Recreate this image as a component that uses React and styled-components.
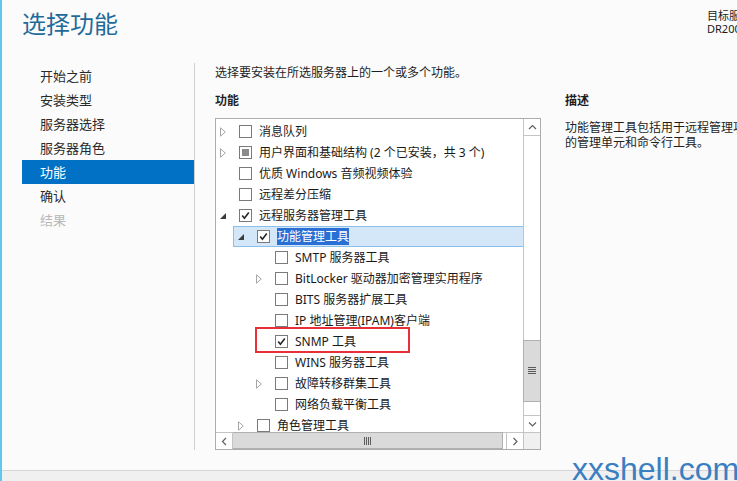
import React from 'react'
import styled, { createGlobalStyle } from 'styled-components'

const GlobalStyle = createGlobalStyle`
  html, body {
    margin: 0;
    padding: 0;
    background: #fbfbfb;
    overflow: hidden;
  }
  body {
    font-family: "Noto Sans", "Noto Sans CJK SC", sans-serif;
    color: #1e1e1e;
  }
`

const steps = [
  { label: '开始之前' },
  { label: '安装类型' },
  { label: '服务器选择' },
  { label: '服务器角色' },
  { label: '功能', active: true },
  { label: '确认' },
  { label: '结果', disabled: true },
]

// level, arrow: none | closed | open, check: off | on | partial
const features = [
  { id: 1, level: 0, arrow: 'closed', check: 'off', label: '消息队列' },
  { id: 2, level: 0, arrow: 'closed', check: 'partial', label: '用户界面和基础结构 (2 个已安装，共 3 个)' },
  { id: 3, level: 0, arrow: 'none', check: 'off', label: '优质 Windows 音频视频体验' },
  { id: 4, level: 0, arrow: 'none', check: 'off', label: '远程差分压缩' },
  { id: 5, level: 0, arrow: 'open', check: 'on', label: '远程服务器管理工具' },
  { id: 6, level: 1, arrow: 'open', check: 'on', label: '功能管理工具', selected: true },
  { id: 7, level: 2, arrow: 'none', check: 'off', label: 'SMTP 服务器工具' },
  { id: 8, level: 2, arrow: 'closed', check: 'off', label: 'BitLocker 驱动器加密管理实用程序' },
  { id: 9, level: 2, arrow: 'none', check: 'off', label: 'BITS 服务器扩展工具' },
  { id: 10, level: 2, arrow: 'none', check: 'off', label: 'IP 地址管理(IPAM)客户端' },
  { id: 11, level: 2, arrow: 'none', check: 'on', label: 'SNMP 工具' },
  { id: 12, level: 2, arrow: 'none', check: 'off', label: 'WINS 服务器工具' },
  { id: 13, level: 2, arrow: 'closed', check: 'off', label: '故障转移群集工具' },
  { id: 14, level: 2, arrow: 'none', check: 'off', label: '网络负载平衡工具' },
  { id: 15, level: 1, arrow: 'closed', check: 'off', label: '角色管理工具' },
]

const Arrow = ({ type }) => {
  if (type === 'closed') {
    return (
      <svg width="6" height="10" viewBox="0 0 6 10">
        <path d="M0.5 0.8 L5.3 5 L0.5 9.2 Z" fill="none" stroke="#a6a6a6" strokeWidth="1" />
      </svg>
    )
  }
  if (type === 'open') {
    return (
      <svg width="6" height="6" viewBox="0 0 6 6">
        <path d="M6 0 L6 6 L0 6 Z" fill="#3c3c3c" />
      </svg>
    )
  }
  return null
}

const Check = ({ state }) => (
  <CheckBox>
    {state === 'on' && (
      <svg width="11" height="11" viewBox="0 0 11 11">
        <path d="M2.2 5.6 L4.4 8.2 L8.8 2.4" fill="none" stroke="#262626" strokeWidth="1.6" />
      </svg>
    )}
    {state === 'partial' && <PartialMark />}
  </CheckBox>
)

const Chevron = ({ dir }) => {
  const paths = {
    up: 'M1 5 L4.5 1.5 L8 5',
    down: 'M1 1.5 L4.5 5 L8 1.5',
    left: 'M5 1 L1.5 4.5 L5 8',
    right: 'M1.5 1 L5 4.5 L1.5 8',
  }
  const vertical = dir === 'up' || dir === 'down'
  return (
    <svg width={vertical ? 9 : 7} height={vertical ? 7 : 9} viewBox={vertical ? '0 0 9 7' : '0 0 7 9'}>
      <path d={paths[dir]} fill="none" stroke="#606060" strokeWidth="1.2" />
    </svg>
  )
}

const Grip = ({ horizontal }) => (
  <svg width="8" height="8" viewBox="0 0 8 8">
    {[0.5, 2.5, 4.5, 6.5].map((p) =>
      horizontal
        ? <line key={p} x1={p} y1="0" x2={p} y2="8" stroke="#5a5a5a" strokeWidth="1" />
        : <line key={p} x1="0" y1={p} x2="8" y2={p} stroke="#5a5a5a" strokeWidth="1" />
    )}
  </svg>
)

const renderFeatures = () =>
  features.map(({ id, level, arrow, check, label, selected }) => (
    <Row key={id} $level={level}>
      <Item $selected={selected}>
        <ArrowSlot><Arrow type={arrow} /></ArrowSlot>
        <Check state={check} />
        <Label>{selected ? <Highlight>{label}</Highlight> : label}</Label>
      </Item>
    </Row>
  ))

const App = () => {
  return (
    <>
      <GlobalStyle />
      <Shell>
        <Header>
          <Title>选择功能</Title>
          <Target>
            <div>目标服务器</div>
            <div>DR2008.contoso.com</div>
          </Target>
        </Header>

        <Body>
          <Nav>
            {steps.map(({ label, active, disabled }) => (
              <NavItem key={label} $active={active} $disabled={disabled}>{label}</NavItem>
            ))}
          </Nav>

          <Main>
            <Intro>选择要安装在所选服务器上的一个或多个功能。</Intro>
            <Columns>
              <FeatureColumn>
                <Heading>功能</Heading>
                <ListBox>
                  <Viewport>{renderFeatures()}</Viewport>
                  <VScroll>
                    <ScrollButton $side="bottom"><Chevron dir="up" /></ScrollButton>
                    <VTrack>
                      <VThumb $offset={204}><Grip /></VThumb>
                    </VTrack>
                    <ScrollButton $side="top"><Chevron dir="down" /></ScrollButton>
                  </VScroll>
                  <HScroll>
                    <HButton $side="right"><Chevron dir="left" /></HButton>
                    <HThumb><Grip horizontal /></HThumb>
                    <HButton $side="left"><Chevron dir="right" /></HButton>
                  </HScroll>
                  <Corner />
                  <Callout />
                </ListBox>
              </FeatureColumn>

              <DescColumn>
                <Heading>描述</Heading>
                <DescText>
                  功能管理工具包括用于远程管理功能
                  <br />
                  的管理单元和命令行工具。
                </DescText>
              </DescColumn>
            </Columns>
          </Main>
        </Body>

        <StatusBar />
        <Watermark>xxshell.com</Watermark>
      </Shell>
    </>
  )
}

const Shell = styled.div`
  position: relative;
  width: 737px;
  height: 481px;
  box-sizing: border-box;
  border-left: 2px solid #5ec8ee;
  display: flex;
  flex-direction: column;
  overflow: hidden;
`

const Header = styled.header`
  height: 63px;
  display: flex;
  align-items: flex-start;
  flex-shrink: 0;
`

const Title = styled.h1`
  margin: 0;
  padding: 9px 0 0 20px;
  font-size: 24px;
  line-height: 30px;
  font-weight: 400;
  color: #1f6a9a;
  white-space: nowrap;
`

const Target = styled.div`
  margin-left: auto;
  width: 30px;
  flex-shrink: 0;
  padding-top: 9px;
  font-size: 11px;
  line-height: 13px;
  color: #1a1a1a;
  white-space: nowrap;
`

const Body = styled.div`
  flex: 1;
  display: flex;
  align-items: flex-start;
  min-height: 0;
`

const Nav = styled.nav`
  width: 172px;
  height: 386px;
  padding: 1px 0 0 20px;
  box-sizing: content-box;
  border-right: 1px solid #cfcfcf;
  flex-shrink: 0;
`

const NavItem = styled.div`
  height: 24px;
  line-height: 24px;
  padding-left: 18px;
  font-size: 13px;
  color: ${(p) => (p.$active ? '#ffffff' : p.$disabled ? '#b8b8b8' : '#2a2a2a')};
  background: ${(p) => (p.$active ? '#0071c5' : 'transparent')};
`

const Main = styled.main`
  padding: 1px 0 0 20px;
  flex: 1;
  min-width: 0;
`

const Intro = styled.p`
  margin: 0;
  font-size: 12px;
  line-height: 18px;
  color: #1e1e1e;
  white-space: nowrap;
`

const Columns = styled.div`
  display: flex;
  gap: 24px;
  margin-top: 10px;
`

const FeatureColumn = styled.section`
  width: 326px;
  flex-shrink: 0;
`

const DescColumn = styled.section`
  flex: 1;
  min-width: 0;
  white-space: nowrap;
`

const Heading = styled.h2`
  margin: 0 0 8px;
  font-size: 12px;
  line-height: 18px;
  font-weight: 700;
  color: #1e1e1e;
`

const DescText = styled.p`
  margin: 10px 0 0;
  font-size: 12px;
  line-height: 15px;
  color: #1e1e1e;
`

const ListBox = styled.div`
  position: relative;
  width: 326px;
  height: 332px;
  box-sizing: border-box;
  border: 1px solid #acacac;
  background: #ffffff;
  display: grid;
  grid-template-columns: 1fr 17px;
  grid-template-rows: 1fr 17px;
`

const Viewport = styled.div`
  overflow: hidden;
  min-height: 0;
  padding-top: 2px;
`

const Row = styled.div`
  height: 21px;
  display: flex;
  padding-left: ${(p) => p.$level * 18}px;
`

const Item = styled.div`
  flex: 1;
  display: flex;
  align-items: center;
  box-sizing: border-box;
  border: 1px solid ${(p) => (p.$selected ? '#8cc0ec' : 'transparent')};
  border-right: none;
  background: ${(p) => (p.$selected ? '#d3e7f8' : 'transparent')};
  margin-left: -1px;
`

const ArrowSlot = styled.span`
  width: 19px;
  padding-left: 4px;
  display: flex;
  align-items: center;
  flex-shrink: 0;
`

const CheckBox = styled.span`
  width: 13px;
  height: 13px;
  box-sizing: border-box;
  border: 1px solid #7a7a7a;
  background: #ffffff;
  display: flex;
  align-items: center;
  justify-content: center;
  flex-shrink: 0;
`

const PartialMark = styled.span`
  width: 7px;
  height: 7px;
  background: #8a8a8a;
`

const Label = styled.span`
  margin-left: 7px;
  font-size: 12px;
  line-height: 16px;
  color: #1a1a1a;
  white-space: nowrap;
`

const Highlight = styled.span`
  background: #2a6fd3;
  color: #ffffff;
`

const VScroll = styled.div`
  grid-column: 2;
  grid-row: 1;
  border-left: 1px solid #c4c4c4;
  display: flex;
  flex-direction: column;
`

const ScrollButton = styled.div`
  height: 16px;
  flex-shrink: 0;
  display: flex;
  align-items: center;
  justify-content: center;
  border-${(p) => p.$side}: 1px solid #c4c4c4;
`

const VTrack = styled.div`
  flex: 1;
  display: flex;
  flex-direction: column;
`

const VThumb = styled.div`
  margin-top: ${(p) => p.$offset}px;
  margin-left: -1px;
  height: 60px;
  background: #dadada;
  border: 1px solid #b0b0b0;
  border-right: none;
  display: flex;
  align-items: center;
  justify-content: center;
`

const HScroll = styled.div`
  grid-column: 1;
  grid-row: 2;
  border-top: 1px solid #c4c4c4;
  display: flex;
`

const HButton = styled.div`
  width: 16px;
  flex-shrink: 0;
  display: flex;
  align-items: center;
  justify-content: center;
  border-${(p) => p.$side}: 1px solid #c4c4c4;
`

const HThumb = styled.div`
  flex: 1;
  margin: -1px 3px 0 0;
  background: #dadada;
  border: 1px solid #b0b0b0;
  border-left: none;
  display: flex;
  align-items: center;
  justify-content: center;
`

const Corner = styled.div`
  grid-column: 2;
  grid-row: 2;
  background: #f0f0f0;
  border-left: 1px solid #c4c4c4;
  border-top: 1px solid #c4c4c4;
`

const Callout = styled.div`
  position: absolute;
  left: 39px;
  top: 208px;
  width: 155px;
  height: 26px;
  box-sizing: border-box;
  border: 2px solid #e8303a;
  pointer-events: none;
`

const StatusBar = styled.footer`
  height: 11px;
  flex-shrink: 0;
  box-sizing: border-box;
  border-top: 1px solid #d6d6d6;
  background: #f0f0f0;
`

const Watermark = styled.div`
  position: absolute;
  left: 570px;
  top: 453px;
  font-family: "Liberation Sans", Arial, sans-serif;
  font-size: 32px;
  line-height: 32px;
  color: #3a7fc1;
  white-space: nowrap;
`

export default App
